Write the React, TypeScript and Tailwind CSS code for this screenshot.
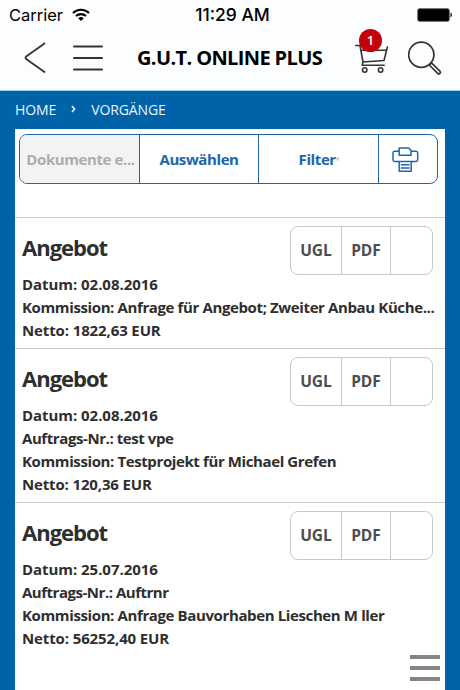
const documents = [
  {
    id: 1,
    title: "Angebot",
    lines: [
      { text: "Datum: 02.08.2016", spacing: "tracking-[-0.05px]" },
      { text: "Kommission: Anfrage für Angebot; Zweiter Anbau Küche...", spacing: "tracking-[-0.38px]" },
      { text: "Netto: 1822,63 EUR", spacing: "tracking-[-0.12px]" },
    ],
  },
  {
    id: 2,
    title: "Angebot",
    lines: [
      { text: "Datum: 02.08.2016", spacing: "tracking-[-0.05px]" },
      { text: "Auftrags-Nr.: test vpe", spacing: "tracking-[-0.42px]" },
      { text: "Kommission: Testprojekt für Michael Grefen", spacing: "tracking-[-0.39px]" },
      { text: "Netto: 120,36 EUR", spacing: "tracking-[-0.15px]" },
    ],
  },
  {
    id: 3,
    title: "Angebot",
    lines: [
      { text: "Datum: 25.07.2016", spacing: "tracking-[-0.05px]" },
      { text: "Auftrags-Nr.: Auftrnr", spacing: "tracking-[-0.48px]" },
      { text: "Kommission: Anfrage Bauvorhaben Lieschen M ller", spacing: "tracking-[-0.38px]" },
      { text: "Netto: 56252,40 EUR", spacing: "tracking-[-0.12px]" },
    ],
  },
];

function WifiIcon() {
  return (
    <svg width="18" height="14" viewBox="0 0 18 14" fill="none" stroke="#000" strokeWidth="2.1">
      <path d="M1 5.1C5.4.7 12.6.7 17 5.1" />
      <path d="M4 8.1c2.8-2.7 7.2-2.7 10 0" />
      <path d="M9 13 6.2 10.2c1.6-1.5 4-1.5 5.6 0Z" fill="#000" stroke="none" />
    </svg>
  );
}

function BatteryIcon() {
  return (
    <svg width="36" height="14" viewBox="0 0 36 14">
      <rect x="0.6" y="0.6" width="31.8" height="12.8" rx="2" fill="#000" stroke="#77797b" strokeWidth="1" />
      <path d="M33.5 4.6c1.8.5 1.8 4.3 0 4.8Z" fill="#000" />
    </svg>
  );
}

function CartIcon() {
  return (
    <svg width="34" height="30" viewBox="0 0 34 30" fill="none" stroke="#343436" strokeWidth="1.6" strokeLinecap="round" strokeLinejoin="round">
      <path d="M.8 2.500H5L8 19l21-1.500L32.400 4M6 7.200h25.300M8 19l-.8 3.200h22" />
      <circle cx="9.7" cy="27" r="2.2" />
      <circle cx="25.6" cy="27" r="2.2" />
    </svg>
  );
}

function SearchIcon() {
  return (
    <svg width="34" height="34" viewBox="0 0 34 34" fill="none" stroke="#343436" strokeWidth="1.7">
      <circle cx="13.3" cy="13.8" r="12.6" />
      <path d="m21.300 24 2.200-2.200 8.400 8.400c1.400 1.600-.7 3.700-2.200 2.200Z" strokeLinejoin="round" />
    </svg>
  );
}

function PrinterIcon() {
  return (
    <svg width="27" height="26" viewBox="0 0 27 26" fill="none" stroke="#1d66a8" strokeWidth="1.5" strokeLinejoin="round">
      <path d="M7.200 4H5.500v.2H2.600C1.500 4.200 1 4.900 1 6v6.800c0 1.100.5 1.700 1.600 1.700h21.500c1.100 0 1.600-.6 1.600-1.700V6c0-1.100-.5-1.800-1.600-1.800H19" />
      <path d="M7.200 8.200V1h9.500L19 3.300v4.900Z" />
      <path d="M7.200 14.500v9.800h12v-9.800M8.800 17.800h8.800M8.800 20.900h8.800" />
    </svg>
  );
}

function ActionButtons() {
  return (
    <div className="flex h-[49px] w-[143px] overflow-hidden rounded-lg border-[1.5px] border-[#c9c9c9] text-[15.5px] font-bold text-[#4d4d4d]">
      <button className="flex w-[51px] items-center justify-center border-r border-[#c9c9c9]">UGL</button>
      <button className="flex w-[49px] items-center justify-center border-r border-[#c9c9c9]">PDF</button>
      <button className="flex-1" aria-label="Details" />
    </div>
  );
}

export default function App() {
  return (
    <div className="relative flex h-[690px] w-[460px] flex-col overflow-hidden bg-[#0063a7] font-['Open_Sans',sans-serif]">
      <header className="h-[91px] shrink-0 border-b border-[#9bd3ec] bg-[#fbfdfe]">
        <div className="grid h-[30px] grid-cols-3 items-center pl-[9px] pr-[7px] font-[Inter,sans-serif] text-black">
          <div className="flex items-center gap-[9px] text-[16.5px]">
            <span>Carrier</span>
            <WifiIcon />
          </div>
          <span className="pl-[3px] text-center text-[17.5px] font-medium">11:29 AM</span>
          <div className="flex justify-end">
            <BatteryIcon />
          </div>
        </div>
        <div className="flex h-14 items-center pl-6 pr-[18px]">
          <svg width="22" height="32" viewBox="0 0 22 32" fill="none" stroke="#343436" strokeWidth="1.8" strokeLinecap="round">
            <path d="M20.500 1.500 2.500 14.200q-2 1.500 0 3L20.500 30" />
          </svg>
          <svg className="ml-[27px]" width="30" height="26" viewBox="0 0 30 26" stroke="#343436" strokeWidth="2" strokeLinecap="round">
            <path d="M1 1.500h28M1 13h28M1 24.500h28" />
          </svg>
          <h1 className="ml-[34px] w-[190px] whitespace-nowrap text-[20px] font-bold leading-7 tracking-[-0.62px] text-black">G.U.T. ONLINE PLUS</h1>
          <div className="relative ml-[28px]">
            <CartIcon />
            <span className="absolute -top-[14px] left-[4px] flex size-[23px] items-center justify-center rounded-full bg-[#c6000b] text-[13px] font-semibold text-white">
              1
            </span>
          </div>
          <div className="ml-auto">
            <SearchIcon />
          </div>
        </div>
      </header>

      <nav className="flex h-[38px] shrink-0 items-center pb-0.5 pl-[15px] text-[14px] tracking-[-0.1px] text-[#e9f4fb]">
        <span>HOME</span>
        <svg className="mx-[15px]" width="5" height="8" viewBox="0 0 5 8" fill="none" stroke="#d6e8f5" strokeWidth="1.8">
          <path d="m1 1 2.500 3L1 7" />
        </svg>
        <span>VORGÄNGE</span>
      </nav>

      <main className="mx-[15px] flex min-h-0 flex-1 flex-col bg-white">
        <div className="h-[88px] shrink-0 pl-1 pr-[7px] pt-[5px]">
          <div className="flex h-[50px] overflow-hidden rounded-lg border-[1.5px] border-[#1d66a8] text-[15px] font-bold tracking-[-0.4px] text-[#1d66a8]">
            <button className="w-[120px] whitespace-nowrap border-r border-[#1d66a8] bg-[#f3f3f3] pl-0.5 text-[#adadad]">Dokumente e...</button>
            <button className="w-[119px] border-r border-[#1d66a8]">Auswählen</button>
            <button className="flex w-[120px] items-center justify-center border-r border-[#1d66a8]">
              Filter
              <span className="text-[6px] text-[#b5c6d8]">▾</span>
            </button>
            <button className="flex flex-1 items-center justify-center pr-[5px] pt-0.5" aria-label="Drucken">
              <PrinterIcon />
            </button>
          </div>
        </div>

        {documents.map((doc) => (
          <article key={doc.id} className="shrink-0 border-t border-[#c9c9c9] pb-[6px] pl-[7px] pr-[12px] pt-2">
            <div className="flex h-[47px] items-start justify-between">
              <h2 className="pt-[5px] text-[22px] font-bold leading-[32px] tracking-[-1px] text-[#2e2e2e]">{doc.title}</h2>
              <ActionButtons />
            </div>
            <div className="text-[15px] font-bold leading-[23px] text-[#2e2e2e]">
              {doc.lines.map((line) => (
                <p key={line.text} className={`whitespace-nowrap ${line.spacing}`}>
                  {line.text}
                </p>
              ))}
            </div>
          </article>
        ))}
      </main>

      <button className="absolute bottom-[9px] right-[20px] flex h-[26px] w-[30px] flex-col justify-between" aria-label="Menü">
        <span className="h-1 w-full bg-[#858585]" />
        <span className="h-1 w-full bg-[#858585]" />
        <span className="h-1 w-full bg-[#858585]" />
      </button>
    </div>
  );
}
